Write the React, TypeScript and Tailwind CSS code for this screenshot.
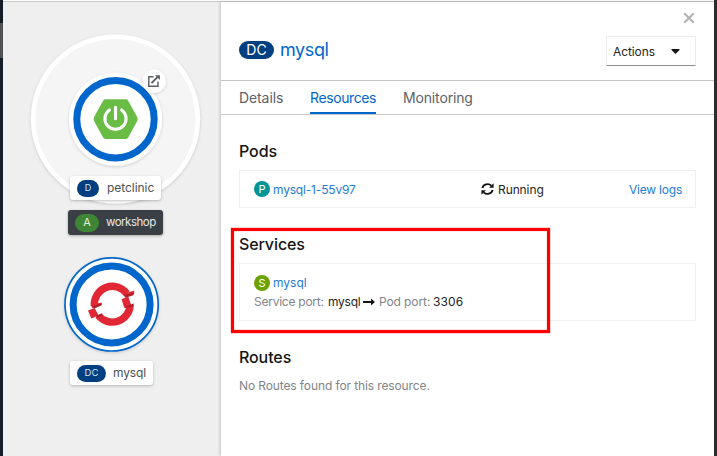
import type { ReactNode } from "react";

function Topology() {
  return (
    <svg className="absolute inset-0" width="218" height="454" viewBox="3 2 218 454">
      <defs>
        <filter id="soft" x="-20%" y="-20%" width="140%" height="140%">
          <feDropShadow dx="0" dy="1" stdDeviation="1.5" floodColor="#030303" floodOpacity="0.17" />
        </filter>
      </defs>
      <circle cx="115.5" cy="119" r="82.3" fill="#f5f5f5" stroke="#fff" strokeWidth="4.6" filter="url(#soft)" />
      <circle cx="115.5" cy="119.2" r="46.5" fill="#fff" filter="url(#soft)" />
      <circle cx="115.5" cy="119.2" r="38.7" fill="#fff" stroke="#0066cc" strokeWidth="7" />
      <path
        d="M105.5 99.3h20.3q1.6 0 2.4 1.4l9 16.3q1.1 2 0 4l-9 16.6q-.8 1.4-2.4 1.4h-20.3q-1.6 0-2.4-1.4l-9-16.6q-1.1-2 0-4l9-16.3q.8-1.4 2.4-1.4z"
        fill="#69bd45"
      />
      <path d="M115.5 107.3v11.4M109.4 110a10.6 10.6 0 1 0 12.2 0" fill="none" stroke="#fff" strokeWidth="3.1" strokeLinecap="round" />
      <circle cx="154" cy="81.3" r="11.7" fill="#fff" filter="url(#soft)" />
      <path d="M153.5 76.8h-4.7v9.5h9.2v-4.8" fill="none" stroke="#5b5e61" strokeWidth="1.4" />
      <path d="M151.5 83.2l6-6" stroke="#5b5e61" strokeWidth="1.9" />
      <path d="M155 75.2h4.9v4.9z" fill="#5b5e61" />

      <circle cx="111.6" cy="304.4" r="46.6" fill="#fff" stroke="#0066cc" strokeWidth="1.7" filter="url(#soft)" />
      <circle cx="111.6" cy="304.4" r="38.5" fill="#fff" stroke="#0066cc" strokeWidth="7" />
      <path
        d="M94.4 306A18 18 0 0 1 126.7 293.5M130.2 305A18 18 0 0 1 98.3 315.5"
        fill="none"
        stroke="#e12733"
        strokeWidth="7.4"
      />
      <path d="M125.6 293.2l8.6-2.8v3.4l-8.6 2.8zM121.6 299.2l6.6-2.6 3 8.3-7 2.9zM91 305l10.7-2.5v2.4l-9.3 3.3zM88 310.6l6.6-2.6 4 7.6-7.3 2.8z" fill="#e12733" />
      <path d="M123.4 294.8l10.8-1.7-.8 2.1-8 2.6zM124 307.6l9.8-4.4-.4 3-7.6 1.8zM91.8 306.2l9.9-2.8-.5 2-6.9 3.1zM95.8 315.6l6.9-2.2-.8 2.4-5.1 2z" fill="#ad202c" />
    </svg>
  );
}

function Section({ title, children, className }: { title: string; children: ReactNode; className: string }) {
  return (
    <section className={className}>
      <h2 className="h-6 text-[16px] font-medium leading-6 tracking-[-0.1px] text-[#151515]">{title}</h2>
      {children}
    </section>
  );
}

function Badge({ letter, className }: { letter: string; className: string }) {
  return (
    <span className={`flex size-4 shrink-0 items-center justify-center rounded-full text-[11px] leading-none text-white ${className}`}>
      {letter}
    </span>
  );
}

export default function App() {
  return (
    <div className="relative flex h-[456px] w-[717px] overflow-hidden bg-white font-['Inter','Open_Sans',sans-serif]">
      <div className="w-[3px] shrink-0 bg-[#151d28] pt-[23px]">
        <div className="h-[35px] bg-[#4f5255]" />
      </div>

      <div className="mt-px flex min-w-0 flex-1 border-t border-[#c8c8c8]">
        <aside className="relative w-[218px] shrink-0 bg-[#efefef]">
          <Topology />
          <div className="absolute left-[67px] top-[174px] flex h-6 w-[91px] items-center rounded-[3px] bg-white pl-[7px] shadow-[0_1px_3px_rgba(3,3,3,0.25)]">
            <span className="flex h-[17px] w-[22px] items-center justify-center rounded-full bg-[#004080] text-[9px] text-[#d5e2ef]">D</span>
            <span className="ml-2 text-[12px] tracking-[-0.05px] text-[#4d5054]">petclinic</span>
          </div>
          <div className="absolute left-[65px] top-[208px] flex h-[25px] w-[95px] items-center rounded-[3px] bg-[#393f44] pl-[7px] shadow-[0_1px_3px_rgba(3,3,3,0.3)]">
            <span className="flex h-[18px] w-6 items-center justify-center rounded-full bg-[#3e8635] text-[11px] text-[#e0eedf]">A</span>
            <span className="ml-[7px] pt-px text-[11.5px] tracking-[-0.5px] text-[#e7e8e8]">workshop</span>
          </div>
          <div className="absolute left-[67px] top-[359px] flex h-6 w-[83px] items-center rounded-[3px] bg-white pl-[7px] shadow-[0_1px_3px_rgba(3,3,3,0.25)]">
            <span className="flex h-[17px] w-[29px] items-center justify-center rounded-full bg-[#004080] text-[9.5px] text-[#d5e2ef]">DC</span>
            <span className="ml-[7px] text-[12px] tracking-[-0.15px] text-[#4d5054]">mysql</span>
          </div>
        </aside>

        <main className="relative z-10 flex min-w-0 flex-1 flex-col bg-white shadow-[-1px_0_3px_rgba(3,3,3,0.2)]">
          <header className="flex h-[79px] shrink-0 justify-between border-b border-[#c8c8c8] pl-[18px] pr-[18px]">
            <div className="mt-[39px] flex h-[18px] items-center">
              <span className="flex h-[18px] w-[35px] items-center justify-center rounded-full bg-[#004080] text-[14px] leading-none text-white">DC</span>
              <h1 className="ml-[6px] text-[18px] leading-6 tracking-[-0.4px] text-[#0066cc]">mysql</h1>
            </div>
            <div className="flex flex-col items-end">
              <button aria-label="Close" className="mr-px mt-[10px] flex h-3 w-3 items-center justify-center">
                <svg width="12" height="12" viewBox="0 0 12 12">
                  <path d="M2 2l8 8M10 2l-8 8" stroke="#b4b4b4" strokeWidth="2.2" strokeLinecap="square" />
                </svg>
              </button>
              <button className="mt-3 flex h-[30px] w-[90px] items-center border border-[#ededed] border-b-[#8a8d90] pl-[6px] text-[12px] text-[#252525]">
                <span className="w-[43px] pt-px text-left tracking-[-0.1px]">Actions</span>
                <svg className="ml-[15px]" width="9" height="5" viewBox="0 0 9 5">
                  <path d="M.5 0h8v1L4.5 5 .5 1z" fill="#151515" />
                </svg>
              </button>
            </div>
          </header>

          <nav className="flex h-[34px] shrink-0 gap-[27px] border-b border-[#c8c8c8] pl-[18px] text-[14px] leading-[33px] text-[#5d6166]">
            <span className="w-11 whitespace-nowrap tracking-[-0.1px]">Details</span>
            <span className="h-[33px] w-[66px] whitespace-nowrap border-b-2 border-[#0066cc] tracking-[-0.4px] text-[#0066cc]">Resources</span>
            <span className="whitespace-nowrap tracking-[-0.15px]">Monitoring</span>
          </nav>

          <div className="px-[18px] pt-6 text-[12px]">
            <Section title="Pods" className="h-[93px]">
              <div className="mt-[7px] flex h-[38px] items-center border border-[#f0f0f0] pl-[14px] pr-[13px]">
                <Badge letter="P" className="bg-[#009596]" />
                <a className="ml-[3px] pt-px tracking-[-0.18px] text-[#247bd2]">mysql-1-55v97</a>
                <span className="ml-auto flex w-[148px] items-center text-[#252525]">
                  <svg className="mr-1" width="13" height="12" viewBox="0 0 13 12">
                    <path d="M1.4 5A5.2 4.8 0 0 1 10.3 2.7M11.6 7A5.2 4.8 0 0 1 2.7 9.3" fill="none" stroke="#151515" strokeWidth="1.9" />
                    <path d="M12.6.3v4.5H8zM.4 11.7V7.2H5z" fill="#151515" />
                  </svg>
                  <span className="pt-px tracking-[-0.1px]">Running</span>
                </span>
                <a className="pt-px tracking-[-0.22px] text-[#247bd2]">View logs</a>
              </div>
            </Section>
            <Section title="Services" className="h-[113px]">
              <div className="mt-[7px] h-[58px] border border-[#f0f0f0] pl-[14px] pt-[11px]">
                <div className="flex h-4 items-center">
                  <Badge letter="S" className="bg-[#6ca100]" />
                  <a className="ml-[3px] text-[#247bd2]">mysql</a>
                </div>
                <div className="mt-[3px] flex h-4 items-center whitespace-nowrap text-[#818488]">
                  <span className="w-[74px] tracking-[-0.25px]">Service port:</span>
                  <span className="w-8 tracking-[-0.25px] text-[#252525]">mysql</span>
                  <svg className="ml-[3px] mr-1" width="12" height="8" viewBox="0 0 12 8">
                    <path d="M0 3h8V.5L12 4 8 7.5V5H0z" fill="#151515" />
                  </svg>
                  <span className="w-[54px] tracking-[-0.1px]">Pod port:</span>
                  <span className="tracking-[0.15px] text-[#252525]">3306</span>
                </div>
              </div>
            </Section>
            <Section title="Routes" className="">
              <p className="mt-[7px] leading-5 tracking-[-0.11px] text-[#818488]">No Routes found for this resource.</p>
            </Section>
          </div>
        </main>
      </div>

      <div className="w-[3px] shrink-0 bg-[#2d2d2d]" />
      <div className="pointer-events-none absolute left-[231px] top-[228px] z-20 h-[105px] w-[319px] border-3 border-[#ff0000] shadow-[0_0_1px_#ff0000,inset_0_0_1px_#ff0000]" />
    </div>
  );
}
